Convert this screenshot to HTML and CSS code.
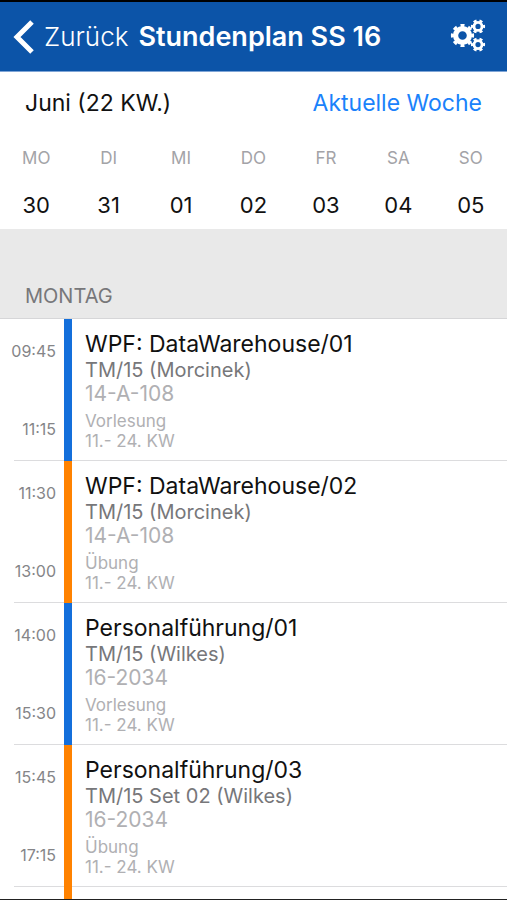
FILE: index.html
```html
<!DOCTYPE html>
<html lang="de">
<head>
<meta charset="utf-8">
<meta name="viewport" content="width=device-width, initial-scale=1">
<title>Stundenplan SS 16</title>
<link rel="stylesheet" href="styles.css">
</head>
<body>
<header class="navbar">
  <a class="back" href="#">
    <svg class="chevron" viewBox="0 0 22 36" aria-hidden="true"><path d="M20 3 L5 18 L20 33"/></svg>
    <span>Zurück</span>
  </a>
  <h1 class="navbar-title">Stundenplan SS 16</h1>
  <button class="settings" type="button" aria-label="Einstellungen">
    <svg viewBox="0 2 36 34" aria-hidden="true">
      <g class="gear-ring">
        <circle cx="12.500" cy="17.500" r="6.900" stroke-width="5.200"/>
        <circle cx="28" cy="8.400" r="4" stroke-width="2.800"/>
        <circle cx="28" cy="26.600" r="4" stroke-width="2.800"/>
      </g>
      <g class="gear-teeth">
        <circle cx="12.500" cy="17.500" r="9.900" stroke-width="3.400" pathLength="16" stroke-dasharray="1 1" stroke-dashoffset="0.500"/>
        <circle cx="28" cy="8.400" r="5.800" stroke-width="2.600" pathLength="12" stroke-dasharray="1 1" stroke-dashoffset="0.500"/>
        <circle cx="28" cy="26.600" r="5.800" stroke-width="2.600" pathLength="12" stroke-dasharray="1 1" stroke-dashoffset="0.500"/>
      </g>
    </svg>
  </button>
</header>

<section class="week">
  <div class="week-head">
    <h2 class="month">Juni (22 KW.)</h2>
    <a class="current" href="#">Aktuelle Woche</a>
  </div>
  <table class="days">
    <thead>
      <tr><th>MO</th><th>DI</th><th>MI</th><th>DO</th><th>FR</th><th>SA</th><th>SO</th></tr>
    </thead>
    <tbody>
      <tr><td>30</td><td>31</td><td>01</td><td>02</td><td>03</td><td>04</td><td>05</td></tr>
    </tbody>
  </table>
</section>

<main class="schedule">
  <h2 class="day-title">MONTAG</h2>
  <ul class="lessons">
    <li class="lesson lecture">
      <div class="times"><time>09:45</time><time>11:15</time></div>
      <div class="details">
        <h3 class="name">WPF: DataWarehouse/01</h3>
        <p class="group">TM/15 (Morcinek)</p>
        <p class="room">14-A-108</p>
        <p class="kind">Vorlesung</p>
        <p class="weeks">11.- 24. KW</p>
      </div>
    </li>
    <li class="lesson exercise">
      <div class="times"><time>11:30</time><time>13:00</time></div>
      <div class="details">
        <h3 class="name">WPF: DataWarehouse/02</h3>
        <p class="group">TM/15 (Morcinek)</p>
        <p class="room">14-A-108</p>
        <p class="kind">Übung</p>
        <p class="weeks">11.- 24. KW</p>
      </div>
    </li>
    <li class="lesson lecture">
      <div class="times"><time>14:00</time><time>15:30</time></div>
      <div class="details">
        <h3 class="name">Personalführung/01</h3>
        <p class="group">TM/15 (Wilkes)</p>
        <p class="room">16-2034</p>
        <p class="kind">Vorlesung</p>
        <p class="weeks">11.- 24. KW</p>
      </div>
    </li>
    <li class="lesson exercise">
      <div class="times"><time>15:45</time><time>17:15</time></div>
      <div class="details">
        <h3 class="name">Personalführung/03</h3>
        <p class="group">TM/15 Set 02 (Wilkes)</p>
        <p class="room">16-2034</p>
        <p class="kind">Übung</p>
        <p class="weeks">11.- 24. KW</p>
      </div>
    </li>
    <li class="lesson exercise">
      <div class="times"></div>
      <div class="details"></div>
    </li>
  </ul>
</main>
</body>
</html>
```
FILE: styles.css
```css
* {
  box-sizing: border-box;
}

body {
  display: flex;
  flex-direction: column;
  height: 100vh;
  margin: 0;
  border-top: 2px solid #000;
  border-bottom: 1px solid #222;
  overflow: hidden;
  background: #fff;
  color: #111;
  font-family: Inter, "Liberation Sans", sans-serif;
}

h1, h2, h3, p, ul {
  margin: 0;
  padding: 0;
  font-weight: 400;
}

a {
  text-decoration: none;
}

.navbar {
  display: flex;
  flex: none;
  align-items: center;
  padding: 17px 21px 16px 12px;
  border-bottom: 1px solid #7fa5d6;
  background: #0c54a8;
  color: #fff;
}

.back {
  display: flex;
  align-items: center;
  gap: 10px;
  margin-right: 10px;
  color: #fff;
  font-size: 26px;
  font-weight: 300;
  line-height: 36px;
}

.chevron {
  width: 22px;
  height: 36px;
  fill: none;
  stroke: #fff;
  stroke-width: 5;
}

.navbar-title {
  font-size: 27px;
  font-weight: 600;
  line-height: 36px;
}

.settings {
  width: 36px;
  height: 34px;
  margin-left: auto;
  padding: 0;
  border: 0;
  background: none;
}

.settings svg {
  display: block;
  width: 100%;
  overflow: visible;
  fill: none;
  stroke: #fff;
}

.week {
  flex: none;
}

.week-head {
  display: flex;
  justify-content: space-between;
  padding: 15px 25px 16px;
  font-size: 23px;
  line-height: 32px;
}

.month {
  font-size: 23px;
}

.current {
  color: #1a82fb;
}

.days {
  width: 100%;
  border-collapse: collapse;
  table-layout: fixed;
  text-align: center;
}

.days th,
.days td {
  padding: 0;
}

.days th {
  color: #a3a3a7;
  font-size: 17px;
  font-weight: 400;
  line-height: 46px;
}

.days td {
  font-size: 22px;
  line-height: 48px;
}

.schedule {
  flex: 1;
  min-height: 0;
  overflow: hidden;
}

.day-title {
  padding: 51px 25px 6px;
  border-bottom: 1px solid #d6d6d8;
  background: #e9e9e9;
  color: #77777a;
  font-size: 20px;
  line-height: 32px;
}

.lessons {
  list-style: none;
}

.lesson {
  display: flex;
  height: 142px;
  background: linear-gradient(#dcdcde, #dcdcde) 14px 100% / 100% 1px no-repeat;
}

.times {
  display: flex;
  flex-direction: column;
  justify-content: space-between;
  width: 72px;
  padding: 20px 8px;
  padding-left: 0;
  border-right: 8px solid;
  color: #858588;
  font-size: 16px;
  line-height: 24px;
  text-align: right;
}

.lecture .times {
  border-color: #146fdb;
}

.exercise .times {
  border-color: #ff8200;
}

.details {
  padding: 9px 13px;
}

.name {
  font-size: 23px;
  line-height: 32px;
}

.group {
  color: #77777a;
  font-size: 20px;
  line-height: 20px;
}

.room {
  color: #b0b0b3;
  font-size: 21px;
  line-height: 28px;
}

.kind,
.weeks {
  color: #b0b0b3;
  font-size: 17px;
  line-height: 20px;
}

.kind {
  margin-top: 3px;
}
```
